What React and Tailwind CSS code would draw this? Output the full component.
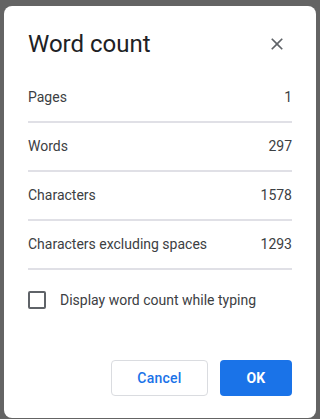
import React from 'react';

const rows = [
    { label: 'Pages', value: '1' },
    { label: 'Words', value: '297' },
    { label: 'Characters', value: '1578' },
    { label: 'Characters excluding spaces', value: '1293' },
];

const CloseIcon = () => (
    <svg width="20" height="20" viewBox="0 0 24 24" fill="#5f6368">
        <path d="M19 6.41L17.59 5 12 10.59 6.41 5 5 6.41 10.59 12 5 17.59 6.41 19 12 13.41 17.59 19 19 17.59 13.41 12z" />
    </svg>
);

const App = () => {
    return (
        <div className="w-[320px] h-[419px] overflow-hidden bg-[#646464] pt-[6px] pl-[4px] font-['Roboto',sans-serif]">
            <div className="w-[312px] h-[412px] bg-white rounded-lg px-6 pt-6 pb-[22px] flex flex-col">
                {/* Header */}
                <div className="flex items-center justify-between h-7">
                    <h1 className="text-[24px] leading-7 text-[#202124] font-normal">Word count</h1>
                    <button className="mr-[5px] flex items-center justify-center">
                        <CloseIcon />
                    </button>
                </div>

                {/* Counts */}
                <ul className="mt-4">
                    {rows.map((row) => (
                        <li
                            key={row.label}
                            className="flex items-center justify-between h-[49px] pt-[13px] pb-[14px] border-b-2 border-[#e0e0e6] text-sm leading-5 text-[#3c4043]"
                        >
                            <span>{row.label}</span>
                            <span>{row.value}</span>
                        </li>
                    ))}
                </ul>

                {/* Checkbox */}
                <label className="mt-5 flex items-center gap-[14px] h-5 text-sm leading-5 text-[#3c4043]">
                    <span className="w-[18px] h-[18px] border-2 border-[#5f6368] rounded-[2px]" />
                    Display word count while typing
                </label>

                {/* Actions */}
                <div className="mt-[50px] flex justify-end gap-3">
                    <button className="w-[97px] h-9 rounded border border-[#dadce0] text-sm font-medium text-[#1a73e8] tracking-[0.25px]">
                        Cancel
                    </button>
                    <button className="w-[72px] h-9 rounded bg-[#1a73e8] text-sm font-bold text-white tracking-[0.25px]">
                        OK
                    </button>
                </div>
            </div>
        </div>
    );
};

export default App;
